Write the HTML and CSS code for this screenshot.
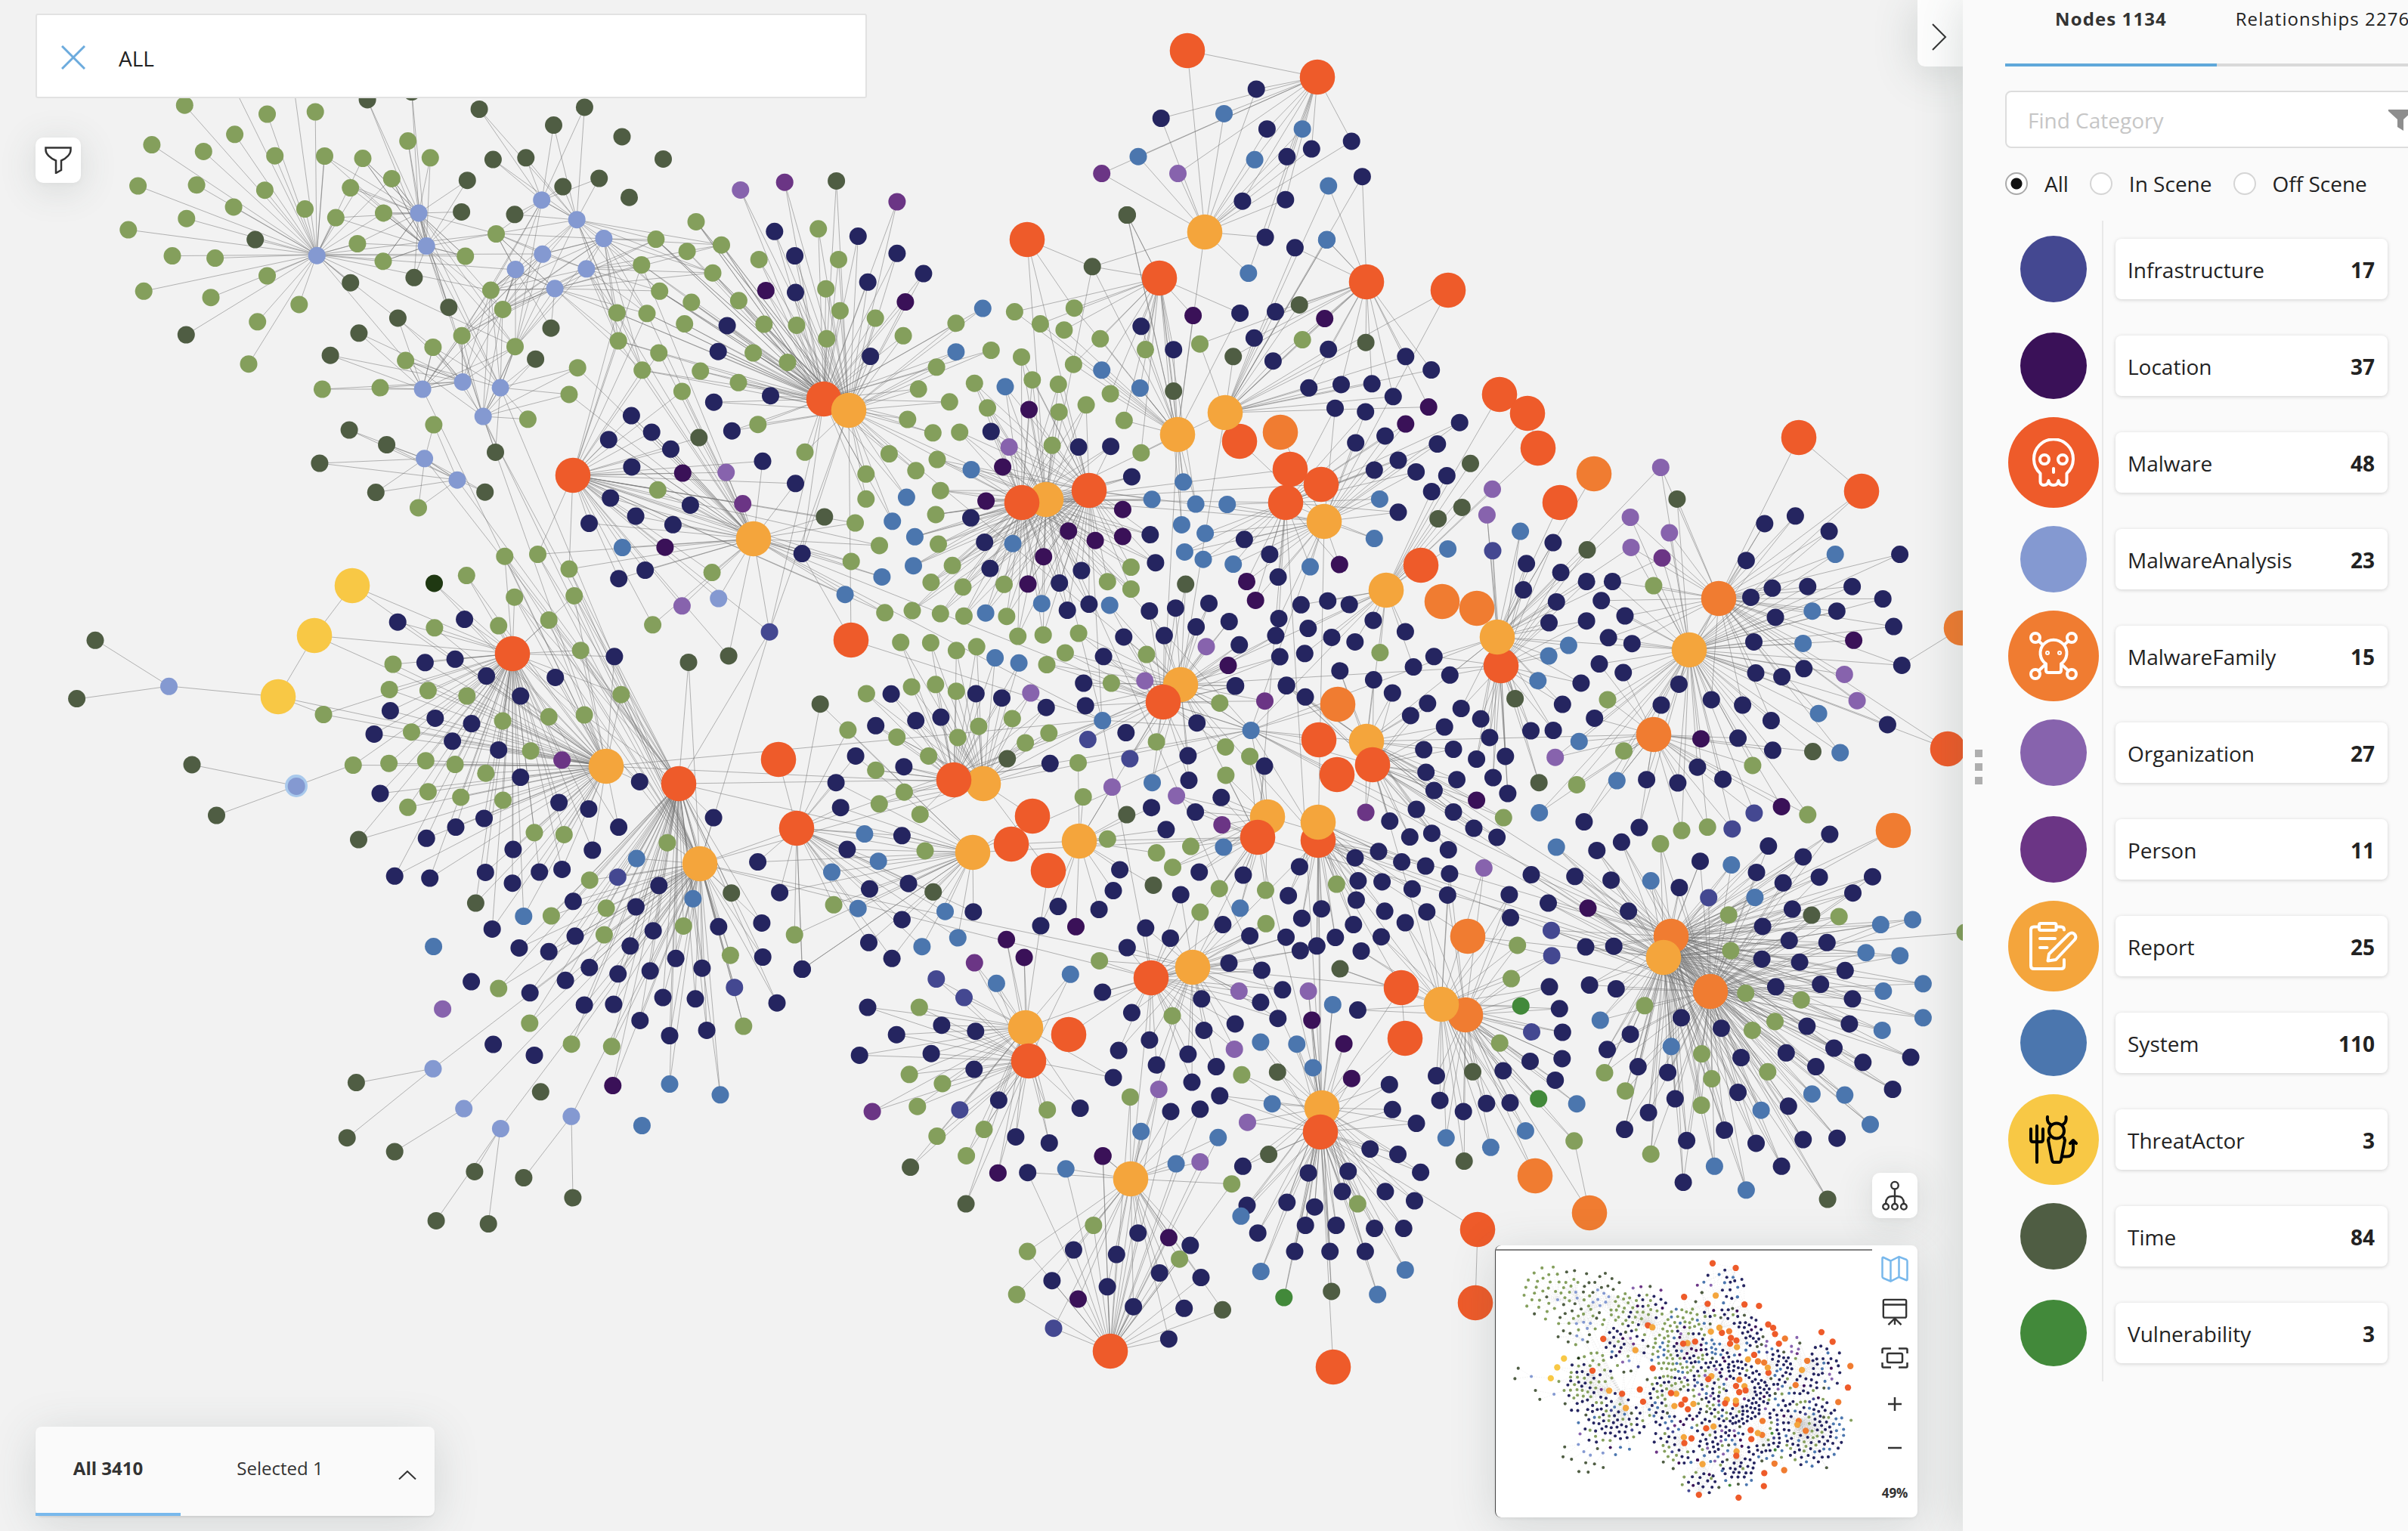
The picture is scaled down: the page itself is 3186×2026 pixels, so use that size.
FILE: index.html
```html
<!DOCTYPE html>
<html lang="en">
<head>
    <meta charset="UTF-8">
    <title>Graph Explorer</title>
    <link rel="stylesheet" href="styles.css">
</head>
<body>
    <main class="scene">
        <svg class="graph" id="graph" viewBox="0 0 2597 2026"></svg>

        <div class="search">
            <svg class="search-clear" viewBox="0 0 32 32"><path d="M1 1l30 30M31 1L1 31"/></svg>
            <span>ALL</span>
        </div>

        <button class="icon-button filter-button">
            <svg viewBox="0 0 36 36"><path d="M1.500 1.500h33v3c0 5-5 10.500-12.500 14V31l-7 4V18.500C7 15 1.500 9.500 1.500 4.500z"/></svg>
        </button>

        <button class="collapse">
            <svg viewBox="0 0 20 36"><path d="M1 1l17 17L1 35"/></svg>
        </button>

        <div class="summary">
            <div class="summary-tab active">All 3410</div>
            <div class="summary-tab">Selected 1</div>
            <svg class="summary-toggle" viewBox="0 0 24 12"><path d="M1 11.500L12 1l11 10.500"/></svg>
        </div>

        <button class="icon-button layout-button">
            <svg viewBox="0 0 36 42"><circle cx="18" cy="7" r="5"/><circle cx="5.500" cy="36.500" r="4"/><circle cx="18" cy="36.500" r="4"/><circle cx="30.500" cy="36.500" r="4"/><path d="M18 12v20M5.500 32c0-6 3-10 9-10h7c6 0 9 4 9 10"/></svg>
        </button>

        <div class="navigator">
            <svg class="minimap" id="minimap" viewBox="-41 -27 2788 1955" preserveAspectRatio="xMinYMin meet"></svg>
            <div class="tools">
                <svg class="tool active" viewBox="0 0 36 36"><path d="M1.500 4q0-1.500 1.500-1l9.500 4.500L23.500 2l10 4q1 .500 1 2v24q0 1.500-1.500 1l-9.500-4-11 5.500-9.500-4q-1.500-.500-1.500-2zM12.500 7.500v27M23.500 2v27"/></svg>
                <svg class="tool" viewBox="0 0 36 38"><rect x="2" y="2" width="32" height="25" rx="2"/><path d="M2 9h32M18 27v10M18 28l-9 9M18 28l9 9"/></svg>
                <svg class="tool fit" viewBox="0 0 36 28"><path d="M1.500 8V3q0-1.500 1.500-1.500h10M23 1.500h10q1.500 0 1.500 1.500v5M1.500 20v5q0 1.500 1.500 1.500h10M23 26.500h10q1.500 0 1.500-1.500v-5"/><rect x="8" y="8" width="20" height="12" rx="2"/></svg>
                <svg class="tool sign" viewBox="0 0 20 20"><path d="M1 10h18M10 1v18"/></svg>
                <svg class="tool sign" viewBox="0 0 20 20"><path d="M1 10h18"/></svg>
                <span class="zoom-level">49%</span>
            </div>
        </div>
    </main>

    <aside class="sidebar">
        <div class="grip"><i></i><i></i><i></i></div>
        <div class="tabs">
            <div class="tab active">Nodes 1134</div>
            <div class="tab">Relationships 2276</div>
        </div>
        <div class="find">
            <span>Find Category</span>
            <svg viewBox="0 0 32 28"><path d="M0 0h32v2L20 13v15l-8-5V13L0 2z"/></svg>
        </div>
        <div class="scopes">
            <span class="radio checked"></span><span class="scope">All</span>
            <span class="radio"></span><span class="scope">In Scene</span>
            <span class="radio"></span><span class="scope">Off Scene</span>
        </div>
        <div class="categories">
            <div class="category"><div class="badge"><span class="dot infrastructure"></span></div><div class="card">Infrastructure<b>17</b></div></div>
            <div class="category"><div class="badge"><span class="dot location"></span></div><div class="card">Location<b>37</b></div></div>
            <div class="category"><div class="badge"><span class="dot malware large"><svg viewBox="0 0 64 64"><path d="M14.500 46.500A26 26 0 1 1 49.500 46.500V57.500a4.500 4.500 0 0 1-4.500 4.500c-3.500 0-6-2-6.500-6-.500 4-3 6-6.500 6s-6-2-6.500-6c-.500 4-3 6-6.500 6a4.500 4.500 0 0 1-4.500-4.500z"/><circle cx="20" cy="28" r="6"/><circle cx="44" cy="28" r="6"/><path d="M32 40v5"/></svg></span></div><div class="card">Malware<b>48</b></div></div>
            <div class="category"><div class="badge"><span class="dot analysis"></span></div><div class="card">MalwareAnalysis<b>23</b></div></div>
            <div class="category"><div class="badge"><span class="dot family large"><svg viewBox="0 0 64 64"><path d="M22 42.500A17.500 17.500 0 1 1 42 42.500V51q0 3-3 3H25q-3 0-3-3zM12 12l5.500 5M52 12l-5.500 5M12 52l9-8.500M52 52l-9-8.500"/><circle cx="8" cy="8" r="6"/><circle cx="56" cy="8" r="6"/><circle cx="8" cy="56" r="6"/><circle cx="56" cy="56" r="6"/><circle cx="24" cy="28" r="1"/><circle cx="40" cy="28" r="1"/></svg></span></div><div class="card">MalwareFamily<b>15</b></div></div>
            <div class="category"><div class="badge"><span class="dot organization"></span></div><div class="card">Organization<b>27</b></div></div>
            <div class="category"><div class="badge"><span class="dot person"></span></div><div class="card">Person<b>11</b></div></div>
            <div class="category"><div class="badge"><span class="dot report large"><svg viewBox="0 0 64 64"><path d="M13 6.500H6q-4 0-4 4V58q0 4 4 4h36q4 0 4-4v-8M35.500 6.500H42q4 0 4 4M15 2h18.500q2 0 2 2v5q0 2-2 2H15q-2 0-2-2V4q0-2 2-2zM14 22h20M14 34h9.500M24.500 51.500l1.500-9 26.500-26.500q4-3 7 0 4 4 0 8L35 50z"/></svg></span></div><div class="card">Report<b>25</b></div></div>
            <div class="category"><div class="badge"><span class="dot system"></span></div><div class="card">System<b>110</b></div></div>
            <div class="category"><div class="badge"><span class="dot actor large"><svg viewBox="0 0 64 64"><path d="M10 14v48M2 18v14q0 3 3 3h10q3 0 3-3V18M24 2q-1 7 4 10M48.500 2q1 7-4 10M26 30l-1 3 5 26q.500 3 3 3h6q2.500 0 3-3l5-26-1-3M44 54.500h5q9 0 9-9V33M54 37l4-4 4 4"/><circle cx="36" cy="20.500" r="10"/></svg></span></div><div class="card">ThreatActor<b>3</b></div></div>
            <div class="category"><div class="badge"><span class="dot time"></span></div><div class="card">Time<b>84</b></div></div>
            <div class="category"><div class="badge"><span class="dot vulnerability"></span></div><div class="card">Vulnerability<b>3</b></div></div>
        </div>
    </aside>

    <script src="graph.js"></script>
</body>
</html>
```
FILE: styles.css
```css
* {
    box-sizing: border-box;
}
body {
    margin: 0;
    display: flex;
    width: 3186px;
    height: 2026px;
    overflow: hidden;
    font-family: "Open Sans", sans-serif;
    font-size: 28px;
    color: #222;
    background: #f2f2f2;
}
svg {
    display: block;
    fill: none;
    stroke: #333;
    stroke-width: 2.500;
}
button {
    border: 0;
    padding: 0;
}

/* canvas */
.scene {
    position: relative;
    width: 2597px;
    height: 2026px;
    overflow: hidden;
}
.graph {
    position: absolute;
    left: 0;
    top: 0;
    width: 2597px;
    height: 2026px;
}
.graph line, .minimap line {
    stroke: #707070;
    stroke-opacity: .5;
    stroke-width: 1;
}
.graph circle, .minimap circle {
    stroke: none;
}
.graph .halo {
    fill: #a9c9ec;
}
.minimap .halo {
    fill: none;
}
.minimap line {
    stroke-opacity: .12;
    stroke-width: 4;
    stroke-dasharray: 9 9;
}
.search {
    position: absolute;
    left: 47px;
    top: 18px;
    width: 1100px;
    height: 112px;
    display: flex;
    align-items: center;
    gap: 44px;
    padding-left: 32px;
    background: #fff;
    border: 2px solid #e2e2e2;
    border-radius: 3px;
}
.search-clear {
    width: 32px;
    height: 32px;
    margin-top: 4px;
    stroke: #6cabdd;
    stroke-width: 3;
}
.search span {
    margin-top: 6px;
}
.icon-button {
    position: absolute;
    width: 60px;
    height: 60px;
    display: flex;
    align-items: center;
    justify-content: center;
    background: #fff;
    border-radius: 10px;
    box-shadow: 0 8px 50px rgba(60, 80, 75, .16), 0 2px 6px rgba(0, 0, 0, .04);
}
.icon-button svg {
    width: 36px;
    height: 36px;
}
.filter-button {
    left: 47px;
    top: 182px;
}
.layout-button {
    left: 2477px;
    top: 1552px;
}
.layout-button svg {
    height: 40px;
}
.collapse {
    position: absolute;
    right: 0;
    top: 0;
    width: 60px;
    height: 88px;
    padding: 10px 0 0 19px;
    background: #fdfdfd;
    border-radius: 0 0 0 10px;
    box-shadow: 0 8px 60px rgba(60, 80, 75, .2);
}
.collapse svg {
    width: 20px;
    height: 36px;
    stroke-width: 2;
}
.summary {
    position: absolute;
    left: 47px;
    top: 1888px;
    width: 528px;
    height: 118px;
    display: flex;
    font-size: 24px;
    color: #333;
    background: #fafafa;
    border-radius: 8px;
    box-shadow: 0 10px 60px rgba(60, 80, 75, .17), 0 2px 2px rgba(0, 0, 0, .08);
}
.summary-tab {
    width: 192px;
    padding-top: 38px;
    text-align: center;
}
.summary-tab + .summary-tab {
    width: 263px;
}
.summary-tab.active {
    font-weight: bold;
    border-bottom: 4px solid #78b8ec;
}
.summary-toggle {
    width: 24px;
    height: 12px;
    margin: 58px 0 0 25px;
    stroke-width: 2;
}
.navigator {
    position: absolute;
    left: 1978px;
    top: 1648px;
    width: 559px;
    height: 360px;
    display: flex;
    background: #fff;
    border-radius: 8px;
    border-left: 1px solid #444;
    box-shadow: 0 10px 60px rgba(60, 80, 75, .17), 0 2px 4px rgba(0, 0, 0, .06);
}
.minimap {
    width: 499px;
    height: 350px;
    margin-top: 5px;
    border-top: 2px solid #808080;
}
.tools {
    width: 60px;
    display: flex;
    flex-direction: column;
    align-items: center;
    padding-top: 13px;
}
.tool {
    width: 36px;
    height: 36px;
    margin-bottom: 21px;
}
.tool.active {
    stroke: #78b8ec;
}
.tool.fit {
    height: 28px;
    margin: 8px 0 37px;
}
.tool.sign {
    width: 20px;
    height: 20px;
    margin-bottom: 38px;
}
.zoom-level {
    font-size: 17px;
    font-weight: bold;
    line-height: 24px;
    color: #333;
}

/* categories */
.sidebar {
    position: relative;
    width: 589px;
    height: 2026px;
    padding-left: 56px;
    background: #fafafa;
    box-shadow: 0 0 60px rgba(60, 80, 75, .2);
}
.grip {
    position: absolute;
    left: 16px;
    top: 992px;
    display: flex;
    flex-direction: column;
    gap: 8px;
}
.grip i {
    width: 10px;
    height: 10px;
    background: #aeaeae;
}
.tabs {
    display: flex;
    height: 88px;
    font-size: 24px;
    letter-spacing: 1.100px;
}
.tab {
    flex: none;
    width: 280px;
    padding-top: 8px;
    text-align: center;
    white-space: nowrap;
    border-bottom: 4px solid #d9d9d9;
}
.tab.active {
    font-weight: bold;
    color: #333;
    border-color: #5fa8da;
}
.find {
    display: flex;
    align-items: center;
    width: 600px;
    height: 76px;
    margin-top: 32px;
    padding: 2px 0 0 28px;
    color: #c6c6c6;
    background: #fff;
    border: 2px solid #ddd;
    border-radius: 8px;
}
.find span {
    width: 477px;
}
.find svg {
    width: 32px;
    height: 28px;
    fill: #8e8e8e;
    stroke: none;
}
.scopes {
    display: flex;
    align-items: center;
    height: 38px;
    margin-top: 28px;
}
.radio {
    width: 30px;
    height: 30px;
    margin-right: 22px;
    background: #fff;
    border: 2px solid #d5d5d5;
    border-radius: 50%;
}
.radio.checked {
    border-color: #aaa;
    background: radial-gradient(circle, #111 7px, #fff 8px);
}
.scope {
    margin-right: 28px;
}
.categories {
    margin-top: 30px;
}
.category {
    display: flex;
    align-items: center;
    height: 128px;
}
.badge {
    width: 130px;
    height: 128px;
    display: flex;
    align-items: center;
    justify-content: center;
    border-right: 2px solid #e8e8e8;
}
.dot {
    display: flex;
    align-items: center;
    justify-content: center;
    width: 88px;
    height: 88px;
    border-radius: 50%;
}
.dot.large {
    width: 120px;
    height: 120px;
}
.dot svg {
    width: 64px;
    height: 64px;
    stroke: #fff;
    stroke-width: 4;
    stroke-linecap: round;
    stroke-linejoin: round;
}
.infrastructure { background: #444891; }
.location { background: #3a1158; }
.malware { background: #ee5b2a; }
.analysis { background: #8499d1; }
.family { background: #f07c31; }
.organization { background: #8763ad; }
.person { background: #6b3585; }
.report { background: #f4a53c; }
.system { background: #4b76ae; }
.actor { background: #f8c845; }
.dot.actor svg { stroke: #000; }
.time { background: #4f5d43; }
.vulnerability { background: #42893a; }
.card {
    display: flex;
    justify-content: space-between;
    align-items: center;
    width: 360px;
    height: 80px;
    margin-left: 16px;
    padding: 2px 17px 0 16px;
    background: #fff;
    border-radius: 8px;
    box-shadow: 0 1px 5px rgba(0, 0, 0, .17);
}
```
FILE: graph.js
```js
const COLORS = {
    g: '#849f5c', t: '#4f5d43', m: '#8499d1', n: '#252560', s: '#4b76ae', l: '#3a1158', i: '#444891',
    o: '#8763ad', p: '#6b3585', v: '#42893a', d: '#1f3812',
    M: '#ee5b2a', F: '#f07c31', R: '#f4a53c', A: '#f8c845'
};

// every region keeps its nodes in its own local units: [x, y, scaleX, scaleY]
const regions = [
    { at: [130, 130, .5102, .3827],
      g: '224 24 438 55 563 47 354 125 139 161 273 184 458 199 587 200 686 208 803 148 861 206 103 303 255 300 432 318 351 376 654 310 761 278 536 383 616 413 740 397 229 416 78 455 672 503 739 564 192 545 303 553 438 614 118 667 292 689 521 713 413 773 390 919 1032 469 952 546 1018 664 1049 730 943 821 868 861 1081 859 797 907 731 1001 581 1006 870 1129 1114 1110 830 1416 1243 932 1221 1024',
      t: '698 5 813 -22 988 38 1181 93 1261 31 1024 212 1109 206 957 284 942 393 1080 402 1205 306 1299 277 407 489 819 620 654 638 909 723 777 760 676 812 602 889 228 818 1174 795 1134 902 651 1147 748 1198 574 1262 720 1363 1030 1224 1003 1362',
      m: '831 397 851 511 1150 352 1241 420 1311 485 1152 539 1082 592 1266 590 1184 658 567 544 841 1006 945 981 1043 1001 998 1100 846 1246 931 1320',
      n: '1273 1470' },
    { at: [800, 180, .4783, .4464],
      t: '48 2 162 68 68 182 641 133 1349 387 1445 234 261 894 608 1129 343 1541 232 1560',
      o: '376 160 336 997 214 1393 1119 922',
      p: '498 137 809 195 382 1090 1375 111',
      g: '253 254 142 306 228 342 323 323 102 382 299 406 427 366 591 275 647 366 152 460 240 493 371 488 34 524 117 526 221 557 441 558 531 561 612 453 651 518 749 540 826 592 614 601 38 607 150 643 411 643 506 671 104 694 265 697 370 731 214 757 424 855 554 937 147 1049 297 1294 133 1449 972 555 1134 521 1205 557 1299 510 1271 575 1371 601 1069 635 1153 655 1297 677 918 685 868 750 1023 733 1183 723 1255 736 954 788 1059 806 1257 818 1332 797 1399 764 1437 843 838 840 908 880 982 878 1238 917 787 942 920 959 1484 939 723 1002 861 992 929 1051 723 1076 916 1122 693 1147 760 1214 923 1210 682 1261 962 1273 903 1323 991 1337 1105 1329 1391 1321 1456 1278 1456 1343 775 1413 851 1407 929 1416 994 1423 1112 1424 819 1501 902 1502 973 1525 1029 1514 1143 1483 1213 1479 1311 1474 1274 1532 1223 1567 1499 1537 1496 633',
      n: '470 283 526 355 528 464 701 297 809 348 728 433 882 408 339 562 314 639 735 653 459 770 302 789 352 874 437 964 528 1030 546 1238 74 829 130 878 11 900 183 928 75 981 16 1073 86 1127 237 1094 189 1152 112 1287 39 1312 27 1543 1069 876 1311 922 1400 920 1458 1010 1013 1132 1051 1204 1066 1282 1319 1288 1258 1325 1280 1406 1340 1388 1509 1182 1524 1265 1507 1408 1436 1485 1380 1543 1484 564 1548 1481',
      l: '446 458 832 492 1174 811 1101 981 1055 1082 216 999 167 1219 1433 1107 1283 1171 1357 1199 1433 1187 1214 1247 1171 1328',
      s: '1046 511 972 640 1108 743 1375 694 1481 747 1014 989 835 1071 796 1142 858 1188 854 1274 767 1307 665 1359 1129 1208 1054 1414 1209 1386 1397 1391 1514 1077 49 1220 1080 1547 1146 1562 1476 61',
      m: '315 1371', i: '456 1470' },
    { at: [1500, 280, .4464, .3954],
      n: '390 86 478 121 315 340 420 335 357 423 118 462 413 500 577 461 806 485 882 530 519 590 615 579 706 576 597 658 687 670 769 619 966 706 745 751 658 774 900 778 713 865 784 832 837 871 928 884 883 937 784 1006 328 1097 403 1147 428 1223 223 1311 124 1327 185 1390 283 1372 313 1450 430 1362 496 1316 575 1303 639 1315 710 1368 517 1395 421 1419 587 1425 656 1440 805 1406 507 1479 433 1490 611 1537 829 1524 890 1489 937 1551 453 1585 711 1567 1243 1108 1164 1178 1266 1208 1155 1266 1342 1238 1419 1238 1253 1306 1386 1302 1456 1353 1231 1376 1342 1370 1407 1426 1477 1446 1380 1514 1451 1543 1326 1578 302 1587',
      l: '176 348 566 358 874 654 806 711 335 1238 361 1301 610 1181 280 1519',
      g: '196 443 500 429 730 1476 1541 1252',
      t: '491 312 688 438 295 485 118 601 998 843 973 990 902 1028 154 1247 1344 1132',
      s: '572 95 340 206 147 905 184 979 277 980 142 1048 212 1077 151 1139 206 1164 295 1180 523 1189 713 1094 729 962 931 1129 1146 1070 1289 1452 1230 1487 1198 1570',
      o: '1063 929 1047 1015 1472 1023 1474 1124 1562 856 215 1456',
      p: '1566 1159', i: '1064 1135' },
    { at: [1050, 850, .5102, .4464],
      g: '189 152 306 132 368 125 422 145 141 260 268 281 480 249 567 226 426 282 601 298 662 269 350 337 213 379 287 444 222 479 328 510 341 618 104 778 824 121 1105 180 941 295 738 357 751 458 1120 310 1183 338 1121 394 814 583 941 624 1030 605 983 667 1104 730 1224 735 1408 717 1054 800 1225 834 793 944 982 1107 326 1082 300 1281 386 1308 321 1376 372 1464 494 1444 448 1522 658 1386 873 1348 1162 1282',
      n: '253 153 473 152 540 165 655 193 213 247 317 232 382 222 161 337 286 369 665 359 110 416 122 490 281 573 139 614 197 731 298 715 281 822 466 799 195 890 255 937 752 121 757 188 862 268 1046 239 1145 130 1278 129 1327 162 1023 336 1025 409 1221 367 1109 460 928 490 1042 503 966 555 846 674 829 736 792 792 686 783 641 840 1052 681 1166 690 1004 748 1113 837 1183 870 913 847 977 877 865 905 1312 665 1283 751 1318 818 1369 790 1277 874 1314 914 1357 900 1405 875 1456 639 1517 620 1464 707 1526 710 1459 764 1533 797 1452 837 1524 873 1472 915 1546 530 1129 951 1214 972 1268 1030 1211 1067 1256 1115 1058 1057 1145 1131 1064 1150 801 1037 877 1098 923 1179 843 1210 1023 1221 941 1253 1096 1258 829 1290 1033 1304 1105 1344 978 1391 1054 1384 1463 1090 192 1082 267 1163 384 1135 472 1153 171 1224 357 1219 468 1266 532 1357 743 1381 576 1466 663 1484 1545 1311 1553 1385 1495 1502 1165 1553 607 1572 1335 1573 1438 1568 22 969 1553 150',
      t: '69 183 554 345 864 511 933 720 362 740 1417 968 1255 1274 1232 1518 303 1556',
      s: '801 232 1186 261 930 416 184 568 220 649 99 681 167 789 393 798 426 876 333 902 1115 607 1158 788 718 984 526 1011 1211 1185 1305 1191 1347 1261 1398 1074 1241 1368 901 1450 1101 1468 992 1546 706 1561',
      o: '615 150 911 114 826 429 993 455 1155 1034 1335 1034 1143 1206 947 1325 1177 1423 1054 1540',
      p: '1222 174 1111 541 1484 504 469 950 204 1391',
      l: '552 881 598 934 732 843 1344 1120 1427 1190 1447 1293 802 1522 530 1573',
      i: '763 288 872 345 370 998 442 1053 431 1386' },
    { at: [1800, 850, .5102, .4464],
      n: '174 181 130 217 261 196 312 227 218 251 335 282 442 262 500 261 524 184 607 225 164 318 241 317 301 346 376 338 170 385 250 407 344 401 382 448 191 439 241 503 145 495 294 551 354 578 185 566 128 577 228 615 107 651 169 663 231 686 134 731 226 749 172 799 116 831 826 124 780 186 910 170 991 186 1065 232 979 284 1069 320 874 370 940 406 742 407 823 417 1025 91 1093 102 1150 78 1404 68 1367 244 580 532 723 549 677 592 613 617 881 649 1058 604 1148 636 1217 569 1027 682 1096 713 1190 696 1328 695 1277 743 556 694 650 705 827 727 695 797 443 689 386 748 487 773 389 816 1120 791 1043 842 1112 884 1210 890 584 903 657 901 1041 939 1139 948 1257 973 1077 1021 1193 1014 1276 1057 594 1016 663 1027 490 1021 516 1086 524 1156 523 1234 440 1242 370 1270 505 1298 197 1285 206 1358 267 1391 327 1367 388 1365 832 1113 936 1144 700 1162 640 1207 1158 1138 1268 1131 1228 1203 1303 1245 1427 1230 1380 1325 1104 1217 1181 1258 987 1231 720 1258 797 1275 816 1353 979 1334 1110 1375 747 1394 685 1444 846 1477 944 1446 1026 1485 1148 1474 1236 1470 1092 1553 145 1426 156 1571 97 1518',
      g: '641 170 683 322 1017 365 561 422 371 520 778 597 833 558 900 548 1160 511 955 808 1241 813 407 898 960 914 391 997 999 1040 1143 1060 1075 1124 1016 1150 737 1077 361 1188 885 1220 911 1294 1056 1273 633 1276 687 1330 884 1372 554 1478 753 1517 1568 860',
      t: '401 167 463 416 1173 324 1170 809 291 1273 269 1538',
      s: '567 294 1188 211 1244 327 665 410 464 505 508 607 962 660 753 707 1023 756 1349 837 1432 822 1311 920 1399 929 1356 1034 1459 1012 1459 1113 1353 1150 622 1120 806 1198 1171 1339 1256 1342 1039 1387 1322 1429 918 1553 561 1368 428 1448 222 1469 338 1497',
      o: '505 341 320 669 1255 95 1288 173', l: '883 286 301 468 1092 487 590 788',
      i: '1021 506 964 553 903 757 495 854 496 929 444 1155', v: '416 1078 462 1353' },
    { at: [420, 700, .4464, .4464],
      g: '555 81 653 75 746 119 442 138 584 202 761 198 686 270 537 287 347 293 780 360 224 401 213 476 328 479 443 495 900 491 18 550 549 569 686 557 791 551 279 602 632 658 106 700 212 695 321 687 408 698 499 724 328 779 425 795 550 804 268 825 643 900 731 906 1037 930 807 1041 693 1147 856 1124 850 1203 1085 1177 1224 1264 1414 1203 537 1362 629 1465 753 1527 872 1534 1263 1474',
      n: '238 276 436 268 319 396 408 386 501 436 705 440 602 495 216 539 349 561 168 608 457 577 400 629 537 655 602 736 186 784 716 811 804 830 494 858 410 884 323 917 229 1029 333 1035 955 749 1174 856 893 884 580 950 815 952 498 1018 658 1017 725 1009 578 1050 758 1104 1012 1057 944 1120 1305 987 1370 1078 518 1186 764 1207 995 1191 1189 1179 1317 1168 598 1242 686 1253 927 1236 806 1300 1062 1273 1140 1302 1320 1269 1437 1305 891 1319 986 1310 456 1342 735 1338 630 1375 791 1411 878 1409 1024 1389 1120 1393 1362 1405 956 1457 1044 1502 1154 1486 521 1528 643 1560',
      t: '122 921 469 1109 1227 1079', s: '946 977 611 1148 344 1238 1113 1096',
      i: '890 1032 1236 1359', p: '725 685', o: '371 1423', d: '346 161' },
    { at: [0, 0, 2.032, 2.032],
      n: '818 58 756 77 825 84 880 92 854 97 887 115 838 102 809 131 837 130 1169 336 1149 341 1191 346 1237 361 1137 365 1154 383 1177 382 1206 382 1140 389 1233 408 1226 390 1196 398 1156 402 1142 418 741 803 699 814 727 817 775 811 755 829 782 832 721 838 685 834 738 851 771 852 761 872 812 785 819 803 843 815 866 815 889 815 870 798 895 800 914 800 921 782 838 783 856 786 874 776 902 776 850 798 1096 770',
      s: '797 74 848 84 817 104 865 121 864 156 1195 361 1180 398 1174 419 436 706 469 713 418 733 821 828 915 827 897 843 808 792 1137 775',
      t: '125 498 141 531 62 417 50 455 232 705 226 741 257 750 284 795 318 797 309 763 341 767 373 780 629 784 796 853 867 841 1190 781 734 140 1092 325 352 711',
      g: '190 47 149 50 712 798 768 820 669 815 662 843 802 771 884 784',
      m: '110 447 193 512 282 696 302 722 326 735 372 727',
      l: '399 707 718 753 761 806 702 846 1207 417', i: '686 865', o: '767 113 1087 347', v: '836 845' }
];

const hubs = [
    ['M', 758, 629], ['M', 1090, 528], ['R', 1123, 543], ['M', 1359, 317], ['M', 1534, 368], ['R', 1384, 661], ['M', 1352, 665], ['M', 1441, 649],
    ['R', 997, 713], ['M', 1126, 847], ['R', 1594, 307], ['M', 1808, 373], ['M', 1916, 384], ['M', 1640, 584], ['R', 1621, 546], ['R', 1558, 575],
    ['F', 1694, 572], ['M', 1707, 621], ['M', 1748, 641], ['M', 1701, 665], ['R', 1752, 690], ['M', 1984, 522], ['M', 2021, 547], ['M', 2035, 593],
    ['F', 2109, 627], ['M', 2064, 665], ['M', 1880, 748], ['R', 1834, 781], ['F', 1908, 796], ['F', 1954, 805], ['M', 1986, 881], ['R', 1981, 843],
    ['R', 1562, 906], ['M', 1539, 929], ['F', 1770, 932], ['M', 1745, 979], ['R', 1808, 981], ['M', 1769, 1025], ['M', 1816, 1012], ['R', 1301, 1037],
    ['M', 1262, 1032], ['M', 1366, 1080], ['M', 1338, 1117], ['R', 1428, 1113], ['R', 1287, 1128], ['M', 1387, 1152], ['R', 1677, 1081], ['M', 1664, 1108],
    ['M', 1744, 1112], ['R', 1744, 1088], ['M', 1523, 1294], ['R', 1578, 1280], ['R', 1357, 1360], ['M', 1361, 1404], ['M', 1414, 1369], ['R', 1749, 1466],
    ['M', 1747, 1498], ['R', 1496, 1560], ['M', 1054, 1096], ['M', 1030, 1005], ['R', 2235, 860], ['F', 2188, 972], ['M', 2577, 991], ['F', 2505, 1099],
    ['F', 1942, 1239], ['F', 2211, 1239], ['R', 2201, 1267], ['F', 2263, 1312], ['F', 1939, 1343], ['R', 1907, 1329], ['M', 1854, 1307], ['M', 1859, 1374],
    ['F', 2031, 1556], ['F', 2103, 1605], ['M', 1955, 1627], ['M', 1952, 1724], ['M', 1571, 67], ['M', 1743, 102], ['F', 2274, 792], ['M', 2380, 579],
    ['M', 2463, 650], ['F', 2595, 831], ['M', 1469, 1788], ['M', 1764, 1809], ['A', 466, 775], ['A', 416, 841], ['A', 368, 922], ['M', 678, 865],
    ['R', 802, 1014], ['M', 898, 1037], ['R', 926, 1143]
];

// hubs that fan out together
const fans = [
    [[1090, 528], [1123, 543]], [[1352, 665], [1384, 661], [1441, 649]], [[758, 629], [997, 713]], [[678, 865], [802, 1014]],
    [[898, 1037], [926, 1143]], [[1594, 307], [1743, 102]], [[1621, 546], [1808, 373]], [[1558, 575], [1534, 368]],
    [[1752, 690], [1701, 665]], [[1834, 781]], [[1981, 843], [1986, 881]], [[2235, 860], [2274, 792]], [[2188, 972], [2235, 860]],
    [[1562, 906], [1539, 929]], [[1808, 981], [1816, 1012]], [[1664, 1108], [1677, 1081]], [[1744, 1112], [1744, 1088]], [[1301, 1037], [1262, 1032]],
    [[1287, 1128], [1054, 1096]], [[1428, 1113]], [[1523, 1294], [1578, 1280]], [[1357, 1360], [1361, 1404]], [[1749, 1466], [1747, 1498]],
    [[1496, 1560], [1469, 1788]], [[1907, 1329], [1939, 1343]], [[2211, 1239], [2201, 1267], [2263, 1312]]
];
const analysisFans = [
    [[419, 337]], [[554, 282], [564, 326]], [[717, 265], [763, 291]], [[799, 316], [718, 336]], [[682, 357], [734, 382]],
    [[559, 515], [612, 505]], [[662, 513], [639, 551]], [[562, 607], [605, 635]]
];

// sets of analyses that share the same indicators
const meshes = [
    { from: [[717, 265], [763, 291], [799, 316], [718, 336], [682, 357], [776, 356], [734, 382]],
      to: [[649, 384], [665, 409], [682, 459], [611, 444], [656, 309]] },
    { from: [[559, 515], [612, 505], [662, 513], [639, 551]],
      to: [[649, 384], [665, 409], [682, 459], [611, 444], [573, 459], [537, 477]] },
    { from: [[554, 282], [564, 326], [419, 337]],
      to: [[473, 249], [507, 282], [518, 236], [473, 322], [507, 346], [445, 288], [480, 210], [429, 206], [656, 309], [616, 339]] },
    { from: [[763, 291], [799, 316], [734, 382], [776, 356]],
      to: [[868, 317], [849, 350], [955, 324], [943, 361], [873, 385], [856, 415], [816, 414], [818, 451], [850, 490]] },
    { from: [[554, 282], [564, 326]], to: [[682, 459], [665, 409], [662, 513], [639, 551]] },
    { from: [[1123, 543], [1090, 528]],
      to: [[868, 317], [849, 350], [955, 324], [943, 361], [921, 293], [873, 385], [856, 415], [816, 414], [818, 451], [850, 490]] },
    { from: [[419, 337]], to: [[682, 357], [718, 336], [649, 384], [682, 459], [573, 459], [537, 477], [463, 374]] },
    { from: [[997, 713]], to: [[764, 487], [753, 522], [835, 550], [862, 572], [887, 594], [806, 582]] },
    { from: [[898, 1037], [926, 1143]], to: [[668, 736], [711, 733], [753, 753], [760, 788], [726, 820], [681, 790], [822, 919], [768, 861], [773, 946]] }
];

const links = [
    [416, 841, 466, 775], [416, 841, 368, 922], [466, 775, 678, 865], [466, 775, 802, 1014], [416, 841, 678, 865], [416, 841, 802, 1014],
    [368, 922, 428, 945], [368, 922, 802, 1014], [127, 847, 224, 908], [102, 925, 224, 908], [224, 908, 368, 922], [254, 1012, 392, 1040], [286, 1079, 392, 1040],
    [392, 1040, 467, 1012], [472, 1433, 573, 1414], [459, 1506, 573, 1414], [522, 1524, 614, 1467], [577, 1615, 662, 1493], [646, 1620, 662, 1493],
    [628, 1550, 662, 1493], [693, 1559, 756, 1477], [758, 1585, 756, 1477], [573, 1414, 926, 1143], [614, 1467, 926, 1143], [662, 1493, 926, 1143], [756, 1477, 926, 1143],
    [562, 607, 898, 1037], [605, 635, 898, 1037], [639, 551, 802, 1014], [662, 513, 926, 1143], [639, 551, 926, 1143], [559, 515, 802, 1014], [612, 505, 898, 1037],
    [1018, 836, 1090, 528], [1018, 836, 1123, 543], [1018, 836, 926, 1143], [1018, 836, 898, 1037], [1061, 733, 1126, 847], [1061, 733, 1090, 528], [1061, 733, 1123, 543],
    [1123, 543, 1126, 847], [1123, 543, 1352, 665], [1123, 543, 1384, 661], [1123, 543, 1562, 906], [997, 713, 1458, 953], [997, 713, 1539, 929],
    [1359, 317, 1445, 353], [1445, 353, 1594, 307], [1445, 353, 1384, 661], [1359, 317, 1384, 661], [1359, 317, 1421, 408], [1359, 317, 1441, 649],
    [1571, 67, 1594, 307], [1571, 67, 1743, 102], [1594, 307, 1558, 575], [1621, 546, 1384, 661], [1621, 546, 1562, 906], [1558, 575, 1539, 929],
    [1808, 373, 1621, 546], [1916, 384, 1621, 546], [1916, 384, 1752, 690], [1984, 522, 1834, 781], [2021, 547, 1834, 781], [2035, 593, 1834, 781],
    [2021, 547, 2035, 593], [2109, 627, 1981, 843], [2064, 665, 1981, 843], [1880, 748, 1834, 781], [1752, 690, 1384, 661], [1701, 665, 1384, 661],
    [1748, 641, 1384, 661], [1752, 690, 1441, 649], [1707, 621, 1352, 665], [1752, 690, 1655, 966], [1701, 665, 1664, 1108], [1752, 690, 1744, 1112],
    [1640, 584, 1752, 690], [1694, 572, 1752, 690], [1834, 781, 1655, 966], [1834, 781, 1562, 906], [1834, 781, 1808, 981], [1981, 843, 1655, 966],
    [1986, 881, 1562, 906], [1981, 843, 1808, 981], [1562, 906, 1655, 966], [1539, 929, 1655, 966], [1562, 906, 1664, 1108], [1562, 906, 1744, 1112],
    [1458, 953, 1562, 906], [1458, 953, 1301, 1037], [1458, 953, 1262, 1032], [1458, 953, 1384, 661], [1458, 953, 1441, 649], [1458, 953, 1655, 966],
    [1458, 953, 1523, 1294], [1458, 953, 1126, 847], [1458, 953, 802, 1014], [1655, 966, 1770, 932], [1655, 966, 1745, 979], [1655, 966, 1808, 981],
    [1655, 966, 1816, 1012], [1655, 966, 1744, 1112], [1655, 966, 1677, 1081], [1655, 966, 1301, 1037], [1655, 966, 1262, 1032], [1655, 966, 1769, 1025],
    [1655, 966, 1384, 661], [1655, 966, 1287, 1128], [1655, 966, 2211, 1239], [1655, 966, 2201, 1267], [1301, 1037, 802, 1014], [1262, 1032, 898, 1037],
    [1301, 1037, 1366, 1080], [1301, 1037, 1387, 1152], [1338, 1117, 1428, 1113], [1287, 1128, 1366, 1080], [1428, 1113, 1664, 1108], [1287, 1128, 1664, 1108],
    [1428, 1113, 1539, 929], [1030, 1005, 1054, 1096], [898, 1037, 1287, 1128], [926, 1143, 1301, 1037], [926, 1143, 1458, 953], [926, 1143, 1523, 1294],
    [926, 1143, 1578, 1280], [1387, 1152, 1357, 1360], [1523, 1294, 1414, 1369], [1578, 1280, 1357, 1360], [1523, 1294, 1664, 1108], [1578, 1280, 1677, 1081],
    [1578, 1280, 1744, 1112], [1578, 1280, 1854, 1307], [1578, 1280, 1496, 1560], [1664, 1108, 1749, 1466], [1744, 1112, 1749, 1466], [1744, 1112, 1747, 1498],
    [1816, 1012, 2201, 1267], [1808, 981, 2211, 1239], [1744, 1112, 2201, 1267], [1744, 1112, 2263, 1312], [1664, 1108, 2201, 1267], [1677, 1081, 2211, 1239],
    [1744, 1112, 1907, 1329], [1816, 1012, 1907, 1329], [1744, 1112, 1942, 1239], [1942, 1239, 2201, 1267], [1942, 1239, 2263, 1312], [1854, 1307, 1744, 1112],
    [1854, 1307, 1749, 1466], [1859, 1374, 1749, 1466], [1859, 1374, 1747, 1498], [1854, 1307, 1859, 1374], [2505, 1099, 2201, 1267], [2505, 1099, 2211, 1239],
    [2577, 991, 2235, 860], [2577, 991, 2274, 792], [2380, 579, 2463, 650], [2380, 579, 2274, 792], [2463, 650, 2235, 860], [2463, 650, 2274, 792],
    [2595, 831, 2516, 880], [1939, 1343, 2031, 1556], [1907, 1329, 2031, 1556], [1939, 1343, 2103, 1605], [2083, 1510, 2103, 1605], [1747, 1498, 1764, 1809],
    [1747, 1498, 1955, 1627], [1955, 1627, 1952, 1724], [1749, 1466, 1384, 661], [1749, 1466, 1701, 665], [1981, 843, 2197, 618], [1981, 843, 2157, 685],
    [1981, 843, 2158, 724], [1981, 843, 2199, 738], [1981, 843, 2235, 860], [2188, 972, 1808, 981], [2603, 1234, 2201, 1267], [1496, 1560, 1523, 1294]
];

const nodes = [];
for (const region of regions) {
    const [ox, oy, sx, sy] = region.at;
    for (const kind in region) {
        if (kind === 'at') continue;
        const values = region[kind].split(' ').map(Number);
        for (let k = 0; k < values.length; k += 2) {
            nodes.push({ kind, x: ox + values[k] * sx, y: oy + values[k + 1] * sy });
        }
    }
}

function nearest(fanList, node) {
    let best = null;
    let bestDistance = 330;
    for (const fan of fanList) {
        for (const [x, y] of fan) {
            const d = Math.hypot(x - node.x, y - node.y);
            if (d < bestDistance) {
                bestDistance = d;
                best = fan;
            }
        }
    }
    return best;
}

function line(x1, y1, x2, y2) {
    return `<line x1="${x1.toFixed(1)}" y1="${y1.toFixed(1)}" x2="${x2}" y2="${y2}"/>`;
}

function edges() {
    let out = '';
    for (const node of nodes) {
        const inAnalysis = node.x < 805 && node.y < 712 && node.kind !== 'n';
        // outlying nodes only use the explicit links
        if (node.y > 1405 && node.x < 800 && 'tm'.includes(node.kind)) continue;
        if (node.x < 400 && node.y > 800) continue;
        const fan = nearest(inAnalysis ? analysisFans : fans, node);
        for (const [x, y] of fan || []) {
            out += line(node.x, node.y, x, y);
        }
    }
    for (const mesh of meshes) {
        for (const a of mesh.from) {
            for (const b of mesh.to) {
                out += line(a[0], a[1], b[0], b[1]);
            }
        }
    }
    for (const link of links) {
        out += line(...link);
    }
    return out;
}

function draw(id) {
    const small = nodes.map(n => `<circle cx="${n.x.toFixed(1)}" cy="${n.y.toFixed(1)}" r="11.5" fill="${COLORS[n.kind]}"/>`);
    const big = hubs.map(([kind, x, y]) => `<circle cx="${x}" cy="${y}" r="23.3" fill="${COLORS[kind]}"/>`);
    const selected = '<circle class="halo" cx="392" cy="1040" r="15"/>';
    document.getElementById(id).innerHTML = edges() + selected + small.join('') + big.join('');
}

draw('graph');
draw('minimap');
```
